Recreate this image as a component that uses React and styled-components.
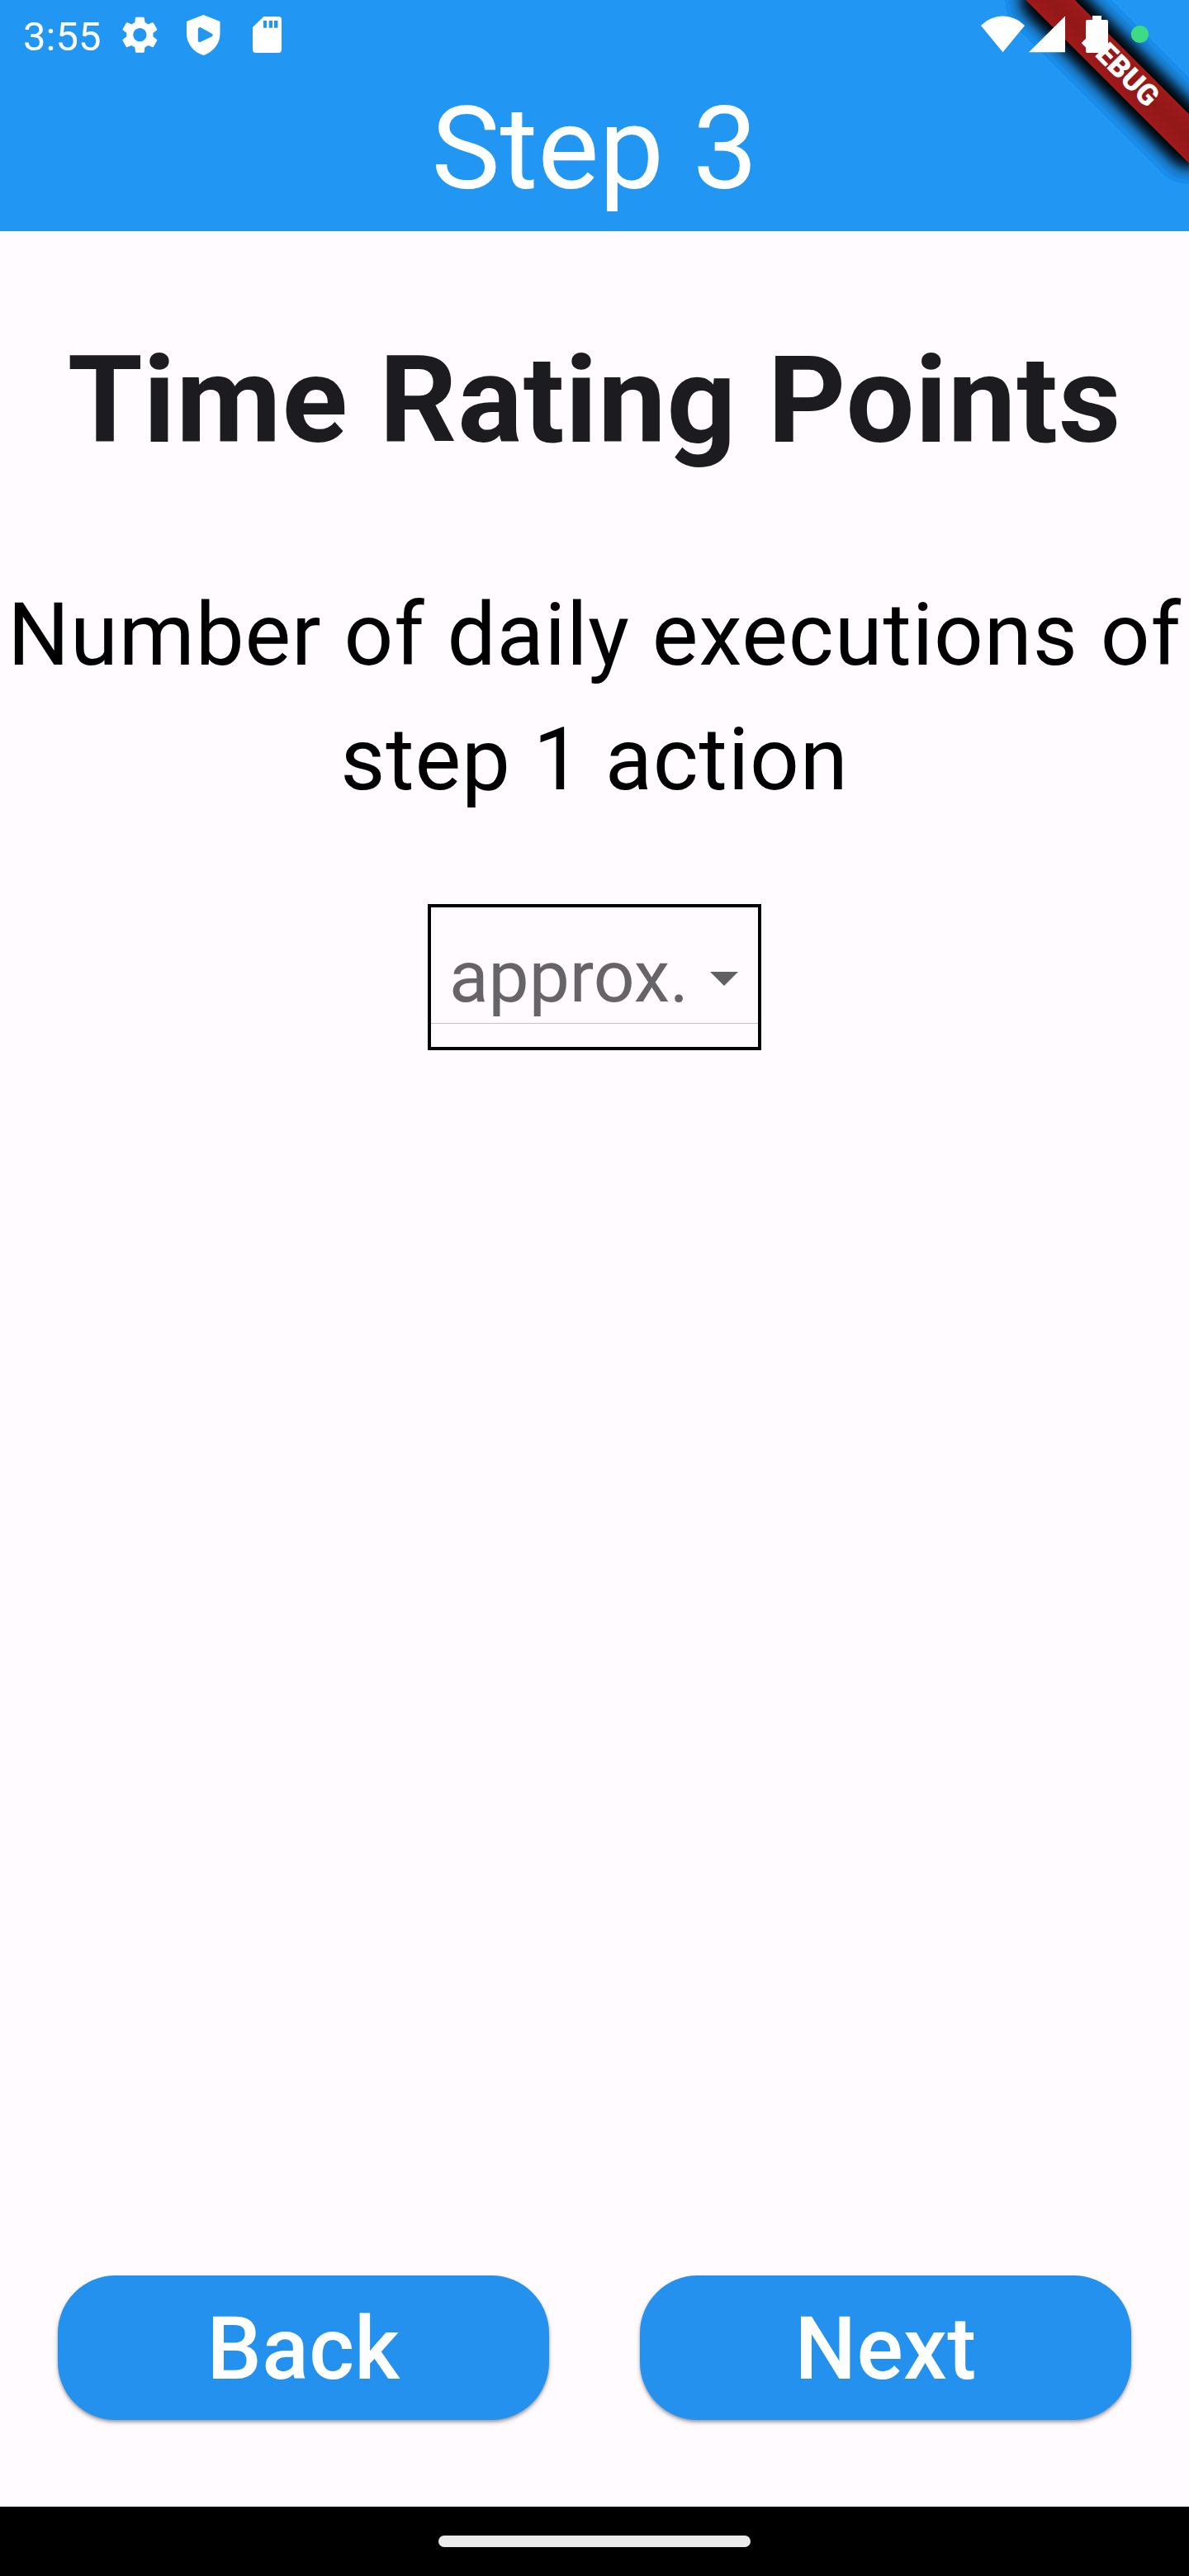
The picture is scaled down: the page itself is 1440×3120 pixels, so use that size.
import React from "react";
import styled, { createGlobalStyle } from "styled-components";

const GlobalStyle = createGlobalStyle`
  * { box-sizing: border-box; }
  body { margin: 0; background: #fffbff; font-family: Roboto, "Noto Sans", sans-serif; }
`;

const Screen = styled.div`
  position: relative;
  display: flex;
  flex-direction: column;
  width: 1440px;
  height: 3120px;
  overflow: hidden;
  background: #fffbff;
`;

const Header = styled.header`
  display: flex;
  flex-direction: column;
  height: 280px;
  background: #2196f3;
  color: #fff;
`;

const StatusBar = styled.div`
  position: relative;
  z-index: 2;
  display: flex;
  justify-content: space-between;
  align-items: center;
  height: 84px;
  padding: 0 49px 0 28px;
`;

const StatusGroup = styled.div`
  display: flex;
  align-items: center;
`;

const Clock = styled.span`
  width: 115px;
  font-size: 49px;
  line-height: 84px;
  padding-top: 5px;
`;

const StatusIcon = styled.svg`
  display: block;
  flex: none;
  width: ${(p) => p.$w}px;
  height: 84px;
  margin-left: ${(p) => p.$gap || 0}px;
  fill: #fff;
`;

const Title = styled.h1`
  margin: 0;
  font-size: 140px;
  font-weight: 400;
  line-height: 192px;
  text-align: center;
`;

const BannerClip = styled.div`
  position: absolute;
  top: 0;
  right: 0;
  width: 300px;
  height: 280px;
  overflow: hidden;
`;

const bannerShadow = Array(10).fill("0 0 25px rgba(0, 0, 0, 0.5)").join(", ");

const Banner = styled.div`
  position: absolute;
  top: 63px;
  left: 76px;
  width: 280px;
  height: 42px;
  transform: rotate(45deg);
  background: linear-gradient(#a01a1a, #921717 50%, #a01a1a);
  box-shadow: ${bannerShadow};
  color: #fff;
  font-size: 35.7px;
  font-weight: 900;
  line-height: 39px;
  text-align: center;
`;

const Content = styled.main`
  display: flex;
  flex: 1;
  flex-direction: column;
  align-items: center;
`;

const Heading = styled.h2`
  margin: 100px 0 0;
  color: #1c1b1f;
  font-size: 147px;
  font-weight: 700;
  line-height: 210px;
  letter-spacing: 0.875px;
  white-space: nowrap;
`;

const Question = styled.p`
  margin: 104px 0 0;
  color: #000;
  font-size: 105px;
  line-height: 151px;
  letter-spacing: 0.875px;
  text-align: center;
  white-space: nowrap;
`;

const Dropdown = styled.div`
  display: flex;
  flex-direction: column;
  width: 404px;
  height: 177px;
  margin-top: 99px;
  border: 4px solid #000;
`;

const DropdownValue = styled.div`
  display: flex;
  justify-content: space-between;
  align-items: center;
  height: 141px;
  padding: 28px 24px 0 22px;
  border-bottom: 1px solid #c5c2c5;
  color: #666468;
  font-size: 87.5px;
  line-height: 105px;
`;

const Caret = styled.span`
  margin-bottom: -5px;
  border: 17.5px solid transparent;
  border-top-color: #616161;
  border-bottom-width: 0;
`;

const Actions = styled.div`
  display: flex;
  justify-content: space-between;
  padding: 0 70px 105px;
`;

const ActionButton = styled.button`
  width: 595px;
  height: 175px;
  padding: 2px 0 0;
  border: 0;
  border-radius: 70px;
  background: #2591ef;
  box-shadow: 0 3px 5px rgba(0, 0, 0, 0.3), 0 2px 3px rgba(0, 0, 0, 0.12);
  color: #fff;
  font: 500 105px/175px Roboto, sans-serif;
  letter-spacing: 0.35px;
`;

const NavigationBar = styled.footer`
  display: flex;
  justify-content: center;
  align-items: center;
  height: 84px;
  background: #000;
`;

const HomeHandle = styled.div`
  width: 378px;
  height: 14px;
  border-radius: 7px;
  background: #ebebeb;
`;

export default function App() {
  return (
    <Screen>
      <GlobalStyle />
      <Header>
        <StatusBar>
          <StatusGroup>
            <Clock>3:55</Clock>
            <StatusIcon $w={52} viewBox="143 0 52 84">
              <path
                transform="translate(142.5 15.3) scale(2.24)"
                d="M19.14 12.94c.04-.3.06-.61.06-.94 0-.32-.02-.64-.07-.94l2.03-1.58c.18-.14.23-.41.12-.61l-1.92-3.32c-.12-.22-.37-.29-.59-.22l-2.39.96c-.5-.38-1.03-.7-1.62-.94l-.36-2.54c-.04-.24-.24-.41-.48-.41h-3.84c-.24 0-.43.17-.47.41l-.36 2.54c-.59.24-1.13.57-1.62.94l-2.39-.96c-.22-.08-.47 0-.59.22L2.74 8.87c-.12.21-.08.47.12.61l2.03 1.58c-.05.3-.09.63-.09.94s.02.64.07.94l-2.03 1.58c-.18.14-.23.41-.12.61l1.92 3.32c.12.22.37.29.59.22l2.39-.96c.5.38 1.03.7 1.62.94l.36 2.54c.05.24.24.41.48.41h3.84c.24 0 .44-.17.47-.41l.36-2.54c.59-.24 1.13-.56 1.62-.94l2.39.96c.22.08.47 0 .59-.22l1.92-3.32c.12-.22.07-.47-.12-.61l-2.01-1.58zM12 15.6c-1.98 0-3.6-1.62-3.6-3.6s1.62-3.6 3.6-3.6 3.6 1.62 3.6 3.6-1.62 3.6-3.6 3.6z"
              />
            </StatusIcon>
            <StatusIcon $w={52} $gap={25} viewBox="220 0 52 84">
              <path
                fillRule="evenodd"
                d="M246.3 18 266.5 26V41C266.5 53 257.5 63.5 246.3 67 235 63.5 226 53 226 41V26ZM241 33.5Q239.8 34 239.8 35.5V49Q240 51.5 242.5 51L257 44Q258.5 42.5 257 41L243.5 33.4Q242 32.8 241 33.5Z"
              />
            </StatusIcon>
            <StatusIcon $w={52} $gap={26} viewBox="298 0 52 84">
              <path
                fillRule="evenodd"
                d="M319.5 20H337Q341 20 341 24V60Q341 64 337 64H310Q306 64 306 60V33ZM319 25V33.7H323V25ZM325.7 25V33.7H330V25ZM332 25V33.7H336.5V25Z"
              />
            </StatusIcon>
          </StatusGroup>
          <StatusIcon $w={203} viewBox="1188 0 203 84">
            <path d="M1188 31C1203 15.5 1226 15.5 1241 31L1214.5 63.3Z" />
            <path d="M1246 63.3 1290 19.5V63.3Z" />
            <path d="M1323 19H1334V24H1340Q1342 24 1342 26V62Q1342 64 1340 64H1317Q1315 64 1315 62V26Q1315 24 1317 24H1323Z" />
            <circle cx="1380.5" cy="41.5" r="10.6" fill="#3ddc84" />
          </StatusIcon>
        </StatusBar>
        <Title>Step 3</Title>
      </Header>
      <Content>
        <Heading>Time Rating Points</Heading>
        <Question>
          Number of daily executions of
          <br />
          step 1 action
        </Question>
        <Dropdown>
          <DropdownValue>
            approx.
            <Caret />
          </DropdownValue>
        </Dropdown>
      </Content>
      <Actions>
        <ActionButton>Back</ActionButton>
        <ActionButton>Next</ActionButton>
      </Actions>
      <NavigationBar>
        <HomeHandle />
      </NavigationBar>
      <BannerClip>
        <Banner>DEBUG</Banner>
      </BannerClip>
    </Screen>
  );
}
